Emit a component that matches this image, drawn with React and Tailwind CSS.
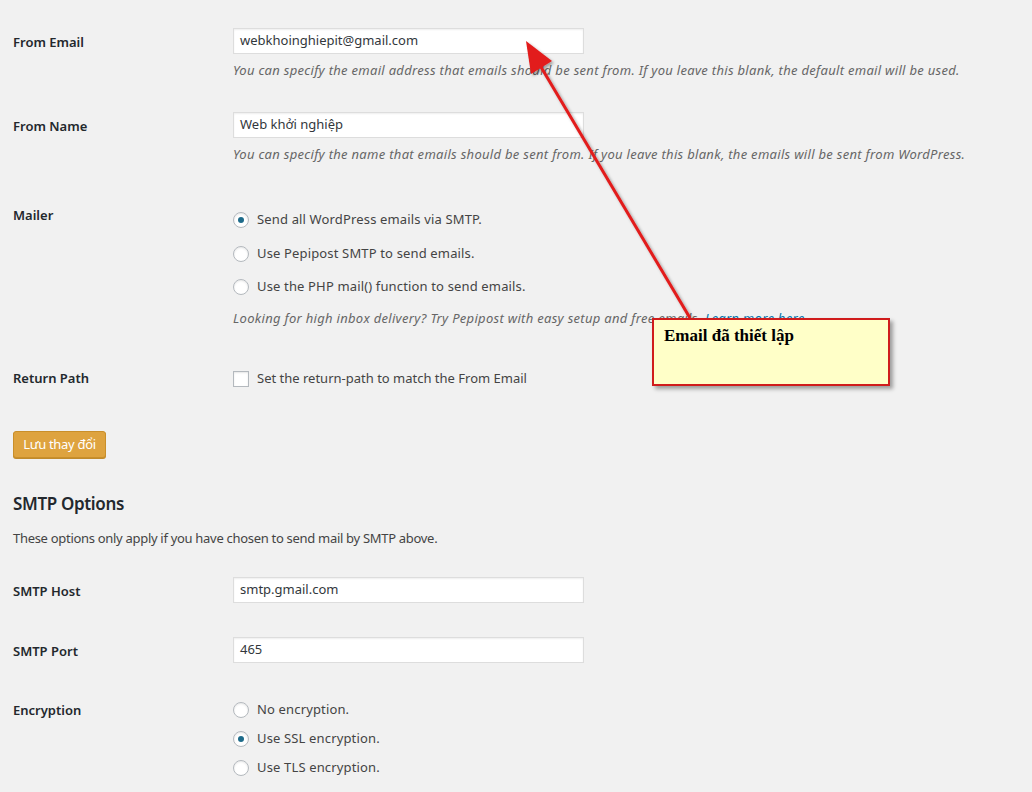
import React from "react";

const font = { fontFamily: '"Noto Sans", "Open Sans", sans-serif' };

function Label({ children, className = "" }) {
  return (
    <div className={`w-[220px] shrink-0 text-[13px] font-semibold text-[#23282d] ${className}`}>
      {children}
    </div>
  );
}

function TextInput({ value }) {
  return (
    <div className="w-[351px] h-[26px] bg-white border border-[#dddddd] shadow-[inset_0_1px_2px_rgba(0,0,0,0.07)] px-[6px] flex items-center text-[13px] text-[#32373c]">
      {value}
    </div>
  );
}

function Radio({ checked, label }) {
  return (
    <div className="flex items-center h-[20px] text-[13px] text-[#444] tracking-[0.15px]">
      <span className="w-[16px] h-[16px] rounded-full border border-[#b4b9be] bg-white shadow-[inset_0_1px_2px_rgba(0,0,0,0.1)] flex items-center justify-center mr-[8px]">
        {checked && <span className="w-[6px] h-[6px] rounded-full bg-[#1e6b8a]" />}
      </span>
      {label}
    </div>
  );
}

function Desc({ children, className = "" }) {
  return (
    <div className={`text-[13px] italic text-[#666] leading-[16px] tracking-[0.3px] ${className}`}>
      {children}
    </div>
  );
}

export default function App() {
  return (
    <div className="relative w-[1032px] h-[792px] overflow-hidden bg-[#f1f1f1]" style={font}>
      <div className="pl-[13px]">
        {/* From Email */}
        <div className="flex pt-[28px]">
          <Label className="pt-[5px]">From Email</Label>
          <div>
            <TextInput value="webkhoinghiepit@gmail.com" />
            <Desc className="mt-[8px]">
              You can specify the email address that emails should be sent from. If you leave this blank, the default email will be used.
            </Desc>
          </div>
        </div>

        {/* From Name */}
        <div className="flex pt-[34px]">
          <Label className="pt-[5px]">From Name</Label>
          <div>
            <TextInput value="Web khởi nghiệp" />
            <Desc className="mt-[8px]">
              You can specify the name that emails should be sent from. If you leave this blank, the emails will be sent from WordPress.
            </Desc>
          </div>
        </div>

        {/* Mailer */}
        <div className="flex pt-[48px]">
          <Label className="-mt-[4px]">Mailer</Label>
          <div className="flex flex-col">
            <div className="flex flex-col gap-[13.5px]">
              <Radio checked label="Send all WordPress emails via SMTP." />
              <Radio label="Use Pepipost SMTP to send emails." />
              <Radio label="Use the PHP mail() function to send emails." />
            </div>
            <Desc className="mt-[13px]">
              Looking for high inbox delivery? Try Pepipost with easy setup and free emails.{" "}
              <span className="text-[#0073aa] underline">Learn more here.</span>
            </Desc>
          </div>
        </div>

        {/* Return Path */}
        <div className="flex pt-[43px] items-center">
          <Label>Return Path</Label>
          <div className="flex items-center h-[20px] text-[13px] text-[#444]">
            <span className="w-[16px] h-[16px] border border-[#b4b9be] bg-white shadow-[inset_0_1px_2px_rgba(0,0,0,0.1)] mr-[8px]" />
            Set the return-path to match the From Email
          </div>
        </div>

        {/* Save button */}
        <div className="pt-[42px]">
          <div className="w-[93px] h-[27px] rounded-[3px] bg-[#dea33f] border border-[#c98f2a] shadow-[0_1px_0_#c08a2c] flex items-center justify-center text-[13px] text-white tracking-[-0.3px]">
            Lưu thay đổi
          </div>
        </div>

        {/* SMTP Options */}
        <h2 className="mt-[34px] text-[17px] font-semibold text-[#23282d] leading-[24px] tracking-[-0.35px]">SMTP Options</h2>
        <div className="mt-[14px] text-[13px] text-[#444] leading-[16px] tracking-[-0.3px]">
          These options only apply if you have chosen to send mail by SMTP above.
        </div>

        {/* SMTP Host */}
        <div className="flex pt-[31px]">
          <Label className="pt-[5px]">SMTP Host</Label>
          <TextInput value="smtp.gmail.com" />
        </div>

        {/* SMTP Port */}
        <div className="flex pt-[34px]">
          <Label className="pt-[5px]">SMTP Port</Label>
          <TextInput value="465" />
        </div>

        {/* Encryption */}
        <div className="flex pt-[37px]">
          <Label className="pt-[1px]">Encryption</Label>
          <div className="flex flex-col gap-[9px]">
            <Radio label="No encryption." />
            <Radio checked label="Use SSL encryption." />
            <Radio label="Use TLS encryption." />
          </div>
        </div>
      </div>

      {/* annotation arrow */}
      <svg className="absolute left-0 top-0 pointer-events-none" width="1032" height="792">
        <defs>
          <filter id="sh" x="-20%" y="-20%" width="140%" height="140%">
            <feDropShadow dx="2" dy="2" stdDeviation="1.5" floodColor="#000" floodOpacity="0.35" />
          </filter>
        </defs>
        <g filter="url(#sh)">
          <line x1="690" y1="318" x2="538" y2="62" stroke="#e21b1b" strokeWidth="3" />
          <polygon points="526,41 531,74 552,61" fill="#e21b1b" />
        </g>
      </svg>

      {/* callout */}
      <div className="absolute left-[652px] top-[318px] w-[238px] h-[68px] bg-[#ffffc8] border-2 border-[#d01c1c] shadow-[3px_3px_4px_rgba(0,0,0,0.35)] pl-[10px] pt-[3px]">
        <span className="text-[17px] font-bold text-black" style={{ fontFamily: '"Liberation Serif", "DejaVu Serif", serif' }}>
          Email đã thiết lập
        </span>
      </div>
    </div>
  );
}
